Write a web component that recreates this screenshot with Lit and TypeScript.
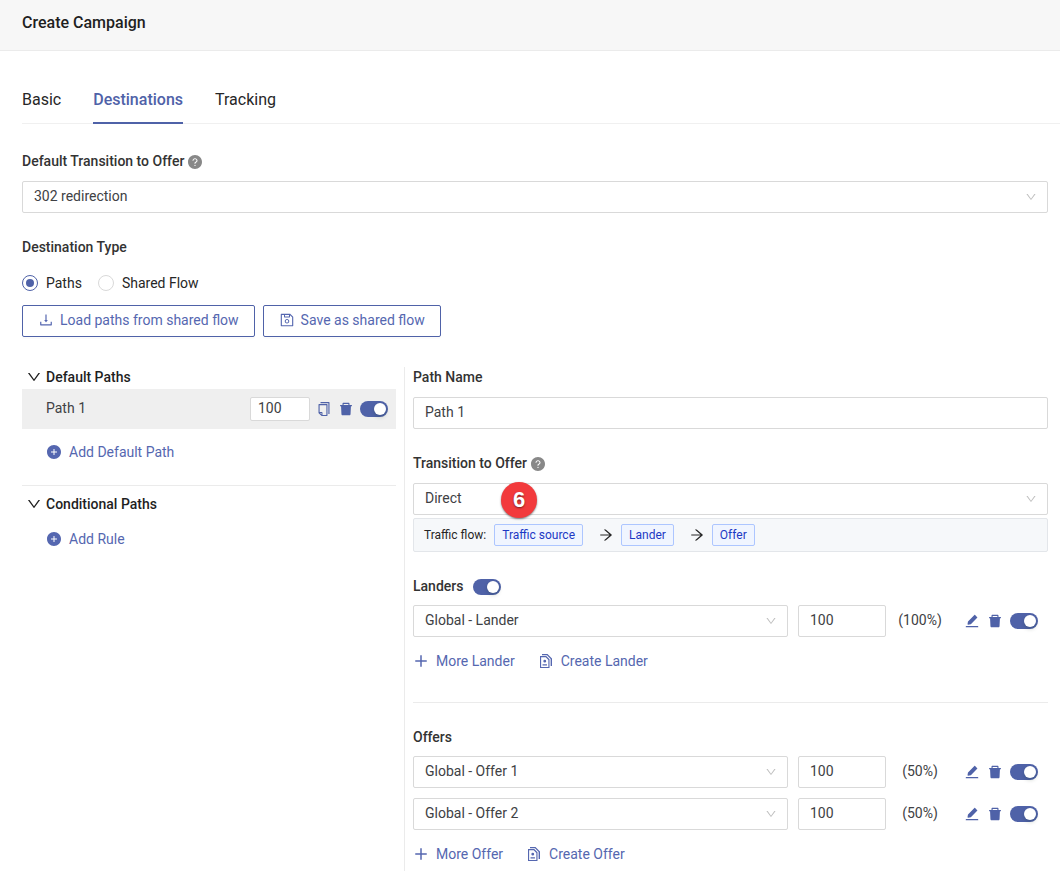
import { LitElement, html, css, svg } from "lit";
import { customElement, property } from "lit/decorators.js";

const ICONS: Record<string, string> = {
  down: "M884 256h-75c-5.1 0-9.9 2.5-12.9 6.6L512 654.2 227.9 262.6c-3-4.1-7.8-6.6-12.9-6.6h-75c-6.5 0-10.3 7.4-6.5 12.7l352.6 486.1c12.8 17.6 39 17.6 51.7 0l352.6-486.1c3.9-5.3.1-12.7-6.4-12.7z",
  question:
    "M512 64C264.6 64 64 264.6 64 512s200.6 448 448 448 448-200.6 448-448S759.4 64 512 64zm0 708c-22.1 0-40-17.9-40-40s17.9-40 40-40 40 17.9 40 40-17.9 40-40 40zm62.9-219.5a48.3 48.3 0 00-30.9 44.8V620c0 4.4-3.6 8-8 8h-48c-4.4 0-8-3.6-8-8v-21.5c0-23.1 6.7-45.9 19.9-64.9 12.9-18.6 30.9-32.8 52.1-40.9 34-13.1 56-41.6 56-72.7 0-44.1-43.1-80-96-80s-96 35.9-96 80v7.6c0 4.4-3.6 8-8 8h-48c-4.4 0-8-3.6-8-8V420c0-39.3 17.2-76 48.4-103.3C430.4 290.4 470 276 512 276s81.6 14.5 111.6 40.7C654.8 344 672 380.7 672 420c0 57.8-38.1 109.8-97.1 132.5z",
  plusCircle:
    "M512 64C264.6 64 64 264.6 64 512s200.6 448 448 448 448-200.6 448-448S759.4 64 512 64zm192 472c0 4.4-3.6 8-8 8H544v152c0 4.4-3.6 8-8 8h-48c-4.4 0-8-3.6-8-8V544H328c-4.4 0-8-3.6-8-8v-48c0-4.4 3.6-8 8-8h152V328c0-4.4 3.6-8 8-8h48c4.4 0 8 3.6 8 8v152h152c4.4 0 8 3.6 8 8v48z",
  save: "M893.3 293.3L730.7 130.7c-7.5-7.5-16.7-13-26.7-16V112H144c-17.7 0-32 14.3-32 32v736c0 17.7 14.3 32 32 32h736c17.7 0 32-14.3 32-32V338.5c0-17-6.7-33.2-18.7-45.2zM384 184h256v104H384V184zm456 656H184V184h136v136c0 17.7 14.3 32 32 32h320c17.7 0 32-14.3 32-32V205.8l136 136V840zM512 442c-79.5 0-144 64.5-144 144s64.5 144 144 144 144-64.5 144-144-64.5-144-144-144zm0 224c-44.2 0-80-35.8-80-80s35.8-80 80-80 80 35.8 80 80-35.8 80-80 80z",
  download:
    "M505.7 661a8 8 0 0012.6 0l112-141.7c4.1-5.2.4-12.9-6.3-12.9h-74.1V168c0-4.4-3.6-8-8-8h-60c-4.4 0-8 3.6-8 8v338.3H400c-6.7 0-10.4 7.7-6.3 12.9l112 141.8zM878 626h-60c-4.4 0-8 3.6-8 8v154H214V634c0-4.4-3.6-8-8-8h-60c-4.4 0-8 3.6-8 8v198c0 17.7 14.3 32 32 32h684c17.7 0 32-14.3 32-32V634c0-4.4-3.6-8-8-8z",
  trash:
    "M864 256H736v-80c0-35.3-28.7-64-64-64H352c-35.3 0-64 28.7-64 64v80H160c-17.7 0-32 14.3-32 32v32c0 4.4 3.6 8 8 8h60.4l24.7 523c1.6 34.1 29.8 61 63.9 61h454c34.2 0 62.3-26.8 63.9-61l24.7-523H888c4.4 0 8-3.6 8-8v-32c0-17.7-14.3-32-32-32zm-200 0H360v-72h304v72z",
  edit: "M880 836H144c-17.7 0-32 14.3-32 32v36c0 4.4 3.6 8 8 8h784c4.4 0 8-3.6 8-8v-36c0-17.7-14.3-32-32-32zm-622.3-84c2 0 4-.2 6-.5L431.9 722c2-.4 3.9-1.3 5.3-2.8l423.9-423.9a9.96 9.96 0 000-14.1L694.9 114.9c-1.9-1.9-4.4-2.9-7.1-2.9s-5.2 1-7.1 2.9L256.8 538.8c-1.5 1.5-2.4 3.3-2.8 5.3l-29.5 168.2a33.5 33.5 0 009.4 29.8c6.6 6.4 14.9 9.9 23.8 9.9z",
  copy: "M832 64H296c-4.4 0-8 3.6-8 8v56c0 4.4 3.6 8 8 8h496v688c0 4.4 3.6 8 8 8h56c4.4 0 8-3.6 8-8V96c0-17.7-14.3-32-32-32zM704 192H192c-17.7 0-32 14.3-32 32v530.7c0 8.5 3.4 16.6 9.4 22.6l173.3 173.3c2.2 2.2 4.7 4 7.4 5.5v1.9h4.2c3.5 1.3 7.2 2 11 2H704c17.7 0 32-14.3 32-32V224c0-17.7-14.3-32-32-32zM350 856.2L263.9 770H350v86.2zM664 888H414V746c0-22.1-17.9-40-40-40H232V264h432v624z",
  arrow:
    "M869 487.8L491.2 159.9c-2.9-2.5-6.6-3.9-10.5-3.9h-88.5c-7.4 0-10.8 9.2-5.2 14l350.2 304H152c-4.4 0-8 3.6-8 8v60c0 4.4 3.6 8 8 8h585.1L386.9 854c-5.6 4.9-2.2 14 5.2 14h91.5c1.9 0 3.8-.7 5.2-2L869 536.2a32.07 32.07 0 000-48.4z",
  plus: "M464 144h96v320h320v96H560v320h-96V560H144v-96h320z",
  pages:
    "M128 192h400l208 208v560H128zM200 264v624h464V440L496 264zM256 64h352l288 288v480h-88V384L576 136H256zM432 430a90 90 0 110 180 90 90 0 010-180zM290 720h284v72H290z",
};

const icon = (name: string, size = 16) => html`<svg
  class="icon"
  width=${size}
  height=${size}
  viewBox="0 0 1024 1024"
  fill="currentColor"
  fill-rule="evenodd"
  aria-hidden="true"
>${svg`<path d=${ICONS[name]}></path>`}</svg>`;

const controls = css`
  *, *::before, *::after { box-sizing: border-box; }
  .icon { display: block; flex: none; }
  button, input, select { font: inherit; color: inherit; margin: 0; }
  .field {
    width: 100%;
    min-width: 0;
    height: 32px;
    padding: 0 11px 2px;
    border: 1px solid #d9d9d9;
    border-radius: 2px;
    background: #fff;
    color: #404144;
    appearance: none;
    outline: none;
  }
  .select { display: grid; align-items: center; flex: 1; min-width: 0; }
  .select > * { grid-area: 1 / 1; }
  .select .icon { justify-self: end; margin-right: 11px; color: #bfbfbf; pointer-events: none; }
  .switch {
    appearance: none;
    flex: none;
    display: flex;
    justify-content: flex-end;
    width: 28px;
    height: 16px;
    padding: 2px;
    border-radius: 8px;
    background: #4f62a8;
  }
  .switch::before {
    content: "";
    width: 12px;
    height: 12px;
    border-radius: 50%;
    background: #fff;
    box-shadow: 0 2px 4px rgba(0, 35, 11, 0.2);
  }
  .switch:not(:checked) { justify-content: flex-start; background: #bfbfbf; }
  .icon-button { padding: 0; border: 0; background: none; color: #4f62a8; cursor: pointer; }
`;

@customElement("destination-row")
export class DestinationRow extends LitElement {
  @property() name = "";
  @property() weight = "100";
  @property() share = "";

  static styles = [
    controls,
    css`
      :host { display: flex; align-items: center; padding-right: 10px; }
      .weight { width: 88px; margin-left: 10px; }
      .share { width: 68px; padding-bottom: 2px; text-align: center; color: #404144; }
      .actions { display: flex; align-items: center; gap: 7px; margin-left: 10px; }
    `,
  ];

  render() {
    return html`
      <div class="select">
        <select class="field" aria-label="Destination"><option>${this.name}</option></select>
        ${icon("down", 12)}
      </div>
      <input class="field weight" aria-label="Weight" .value=${this.weight} />
      <span class="share">(${this.share})</span>
      <div class="actions">
        <button class="icon-button" aria-label="Edit">${icon("edit")}</button>
        <button class="icon-button" aria-label="Delete">${icon("trash")}</button>
        <input type="checkbox" role="switch" class="switch" aria-label="Enabled" checked />
      </div>
    `;
  }
}

@customElement("app-root")
export class AppRoot extends LitElement {
  static styles = [
    controls,
    css`
      :host {
        display: block;
        background: #fff;
        color: #262626;
        font: 14px/20px Roboto, sans-serif;
      }
      .header {
        padding: 12px 22px 16px;
        border-bottom: 1px solid #ebebeb;
        background: #f7f7f7;
      }
      .title { margin: 0; font-size: 16px; line-height: 22px; font-weight: 500; color: #1f1f1f; }
      .tabs {
        display: flex;
        gap: 32px;
        margin: 37px 0 0 22px;
        border-bottom: 1px solid #f0f0f0;
      }
      .tab {
        margin-bottom: -1px;
        padding: 0 0 10px;
        border: 0;
        border-bottom: 2px solid transparent;
        background: none;
        font-size: 16px;
        line-height: 24px;
      }
      .tab.active { border-color: #4f62a8; color: #4f62a8; font-weight: 500; }
      .body { padding: 27px 12px 4px 22px; }
      .label { display: flex; align-items: center; gap: 3px; font-weight: 500; color: #333; }
      .label .icon { margin-top: 2px; color: #888; }
      .stack { display: grid; gap: 10px; }
      .type { margin-top: 24px; }
      .radios { display: flex; gap: 16px; margin: 16px 0 12px; }
      .radio-label { display: flex; align-items: center; gap: 8px; }
      .radio {
        appearance: none;
        display: grid;
        place-items: center;
        width: 16px;
        height: 16px;
        border: 1px solid #d9d9d9;
        border-radius: 50%;
      }
      .radio:checked { border-color: #4f62a8; }
      .radio:checked::before {
        content: "";
        width: 8px;
        height: 8px;
        border-radius: 50%;
        background: #4f62a8;
      }
      .buttons { display: flex; gap: 8px; }
      .outline {
        display: flex;
        align-items: center;
        gap: 6px;
        height: 32px;
        padding: 0 15px 2px;
        border: 1px solid #4f62a8;
        border-radius: 2px;
        background: #fff;
        color: #5567b0;
        box-shadow: 0 2px 0 rgba(0, 0, 0, 0.016);
      }
      .columns { display: grid; grid-template-columns: 9fr 15fr; margin: 30px -6px 0 -8px; }
      .left { padding: 0 8px; }
      .right { padding: 0 6px 7px 8px; border-left: 1px solid #ebebeb; min-width: 0; }
      .group { display: flex; align-items: center; gap: 4px; padding: 0 0 2px 4px; font-weight: 500; color: #1f1f1f; }
      .path {
        display: flex;
        align-items: center;
        gap: 6px;
        height: 40px;
        padding: 0 8px 0 24px;
        background: #efefef;
      }
      .path-name { flex: 1; padding-bottom: 2px; color: #404144; }
      .path .field { width: 60px; height: 24px; padding: 0 7px 2px; }
      .link {
        display: flex;
        align-items: center;
        gap: 7px;
        padding: 0;
        border: 0;
        background: none;
        color: #5567b0;
      }
      .add { margin: 13px 0 0 24px; }
      .line { height: 1px; margin: 0; border: 0; background: #ebebeb; }
      .left .line { margin: 23px 0 8px; }
      .right .line { margin: 31px 0 24px; }
      .more { display: flex; gap: 23px; margin-top: 14px; }
      .transition { margin-top: 24px; }
      .flow {
        display: flex;
        align-items: center;
        min-height: 34px;
        margin-top: 3px;
        padding: 0 10px;
        border: 1px solid #e3e6ea;
        border-radius: 2px;
        background: #f6f8fa;
        font-size: 12px;
      }
      .tag {
        height: 22px;
        padding: 0 7px;
        border: 1px solid #adc6ff;
        border-radius: 2px;
        background: #f0f5ff;
        color: #1d39c4;
        line-height: 20px;
      }
      .flow-label { margin-right: 8px; }
      .flow .icon { margin: 0 7px 0 15px; }
      .section-label { margin-bottom: 9px; }
      .landers { margin-top: 24px; }
      .landers .switch { margin: 2px 0 0 7px; }
      .select-marked { position: relative; }
      .marker {
        position: absolute;
        left: 88px;
        top: -1px;
        z-index: 1;
        width: 36px;
        height: 36px;
        border-radius: 50%;
        background: #f23a3c;
        color: #fff;
        font: bold 22px/36px "Liberation Sans", sans-serif;
        text-align: center;
        text-shadow: 0 1px 2px rgba(0, 0, 0, 0.5);
        box-shadow: 0 1px 2px rgba(0, 0, 0, 0.5);
      }
    `,
  ];

  private tabs = ["Basic", "Destinations", "Tracking"];

  render() {
    return html`
      <header class="header"><h1 class="title">Create Campaign</h1></header>
      <nav class="tabs" role="tablist">
        ${this.tabs.map(
          (t) => html`<button role="tab" class="tab ${t === "Destinations" ? "active" : ""}">${t}</button>`,
        )}
      </nav>
      <main class="body">
        <div class="stack">
          <label class="label" for="default-transition">Default Transition to Offer ${icon("question")}</label>
          <div class="select">
            <select class="field" id="default-transition"><option>302 redirection</option></select>
            ${icon("down", 12)}
          </div>
        </div>
        <div class="label type">Destination Type</div>
        <div class="radios">
          <label class="radio-label"><input class="radio" type="radio" name="type" checked />Paths</label>
          <label class="radio-label"><input class="radio" type="radio" name="type" />Shared Flow</label>
        </div>
        <div class="buttons">
          <button class="outline">${icon("download")}Load paths from shared flow</button>
          <button class="outline">${icon("save")}Save as shared flow</button>
        </div>

        <div class="columns">
          <section class="left">
            <div class="group">${icon("down")}Default Paths</div>
            <div class="path">
              <span class="path-name">Path 1</span>
              <input class="field" aria-label="Path weight" value="100" />
              <button class="icon-button" aria-label="Copy">${icon("copy")}</button>
              <button class="icon-button" aria-label="Delete">${icon("trash")}</button>
              <input type="checkbox" role="switch" class="switch" aria-label="Path enabled" checked />
            </div>
            <button class="link add">${icon("plusCircle")}Add Default Path</button>
            <hr class="line" />
            <div class="group">${icon("down")}Conditional Paths</div>
            <button class="link add">${icon("plusCircle")}Add Rule</button>
          </section>

          <section class="right">
            <div class="stack">
              <label class="label" for="path-name">Path Name</label>
              <input class="field" id="path-name" value="Path 1" />
            </div>
            <div class="stack transition">
              <label class="label" for="transition">Transition to Offer ${icon("question")}</label>
              <div class="select select-marked">
                <select class="field" id="transition"><option>Direct</option></select>
                ${icon("down", 12)}
                <span class="marker">6</span>
              </div>
            </div>
            <div class="flow">
              <span class="flow-label">Traffic flow:</span>
              <span class="tag">Traffic source</span>${icon("arrow")}
              <span class="tag">Lander</span>${icon("arrow")}
              <span class="tag">Offer</span>
            </div>

            <label class="label section-label landers"
              >Landers <input type="checkbox" role="switch" class="switch" checked
            /></label>
            <destination-row name="Global - Lander" share="100%"></destination-row>
            <div class="more">
              <button class="link">${icon("plus")}More Lander</button>
              <button class="link">${icon("pages")}Create Lander</button>
            </div>
            <hr class="line" />

            <div class="label section-label">Offers</div>
            <div class="stack">
              <destination-row name="Global - Offer 1" share="50%"></destination-row>
              <destination-row name="Global - Offer 2" share="50%"></destination-row>
            </div>
            <div class="more">
              <button class="link">${icon("plus")}More Offer</button>
              <button class="link">${icon("pages")}Create Offer</button>
            </div>
          </section>
        </div>
      </main>
    `;
  }
}
